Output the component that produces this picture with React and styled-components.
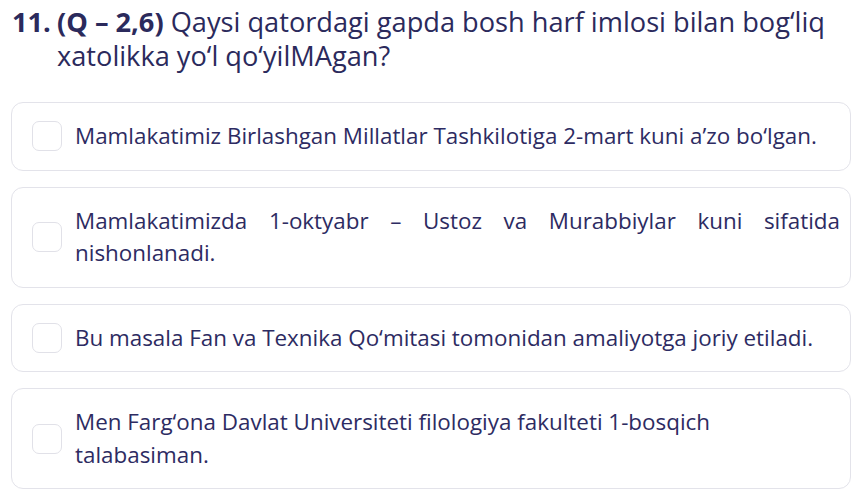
import React from 'react';
import styled, { createGlobalStyle } from 'styled-components';

const GlobalStyle = createGlobalStyle`
    body {
        margin: 0;
        background: #ffffff;
        font-family: 'Open Sans', 'Noto Sans', sans-serif;
        color: #2d2b62;
    }
`;

const Page = styled.div`
    padding: 5px 10px 4px 11px;
`;

const Question = styled.h1`
    display: flex;
    margin: 0 0 29px;
    font-size: 27.2px;
    line-height: 34px;
    font-weight: 400;
    color: #2b2a5c;
`;

const Number = styled.span`
    flex: 0 0 45px;
    padding-left: 1px;
    font-weight: 700;
`;

const Marker = styled.b`
    font-weight: 700;
`;

const OptionList = styled.div`
    display: flex;
    flex-direction: column;
    gap: 16px;
`;

const Option = styled.label`
    display: flex;
    align-items: center;
    gap: 13px;
    padding: 17px 10px 17px 20px;
    border: 1px solid #e3e3ea;
    border-radius: 12px;
    background: #fff;
    cursor: pointer;
`;

const Box = styled.span`
    flex: 0 0 30px;
    height: 30px;
    box-sizing: border-box;
    border: 1px solid #e1e1e8;
    border-radius: 7px;
    background: #fff;
`;

const OptionText = styled.span`
    flex: 1;
    font-size: 22.4px;
    line-height: 32.5px;
    color: #2d2b62;
    text-align: ${p => (p.$justify ? 'justify' : 'left')};
`;

const options = [
    { text: 'Mamlakatimiz Birlashgan Millatlar Tashkilotiga 2-mart kuni a’zo bo‘lgan.' },
    { text: 'Mamlakatimizda 1-oktyabr – Ustoz va Murabbiylar kuni sifatida nishonlanadi.', justify: true },
    { text: 'Bu masala Fan va Texnika Qo‘mitasi tomonidan amaliyotga joriy etiladi.' },
    { text: 'Men Farg‘ona Davlat Universiteti filologiya fakulteti 1-bosqich talabasiman.' },
];

const App = () => {
    return (
        <Page>
            <GlobalStyle />
            <Question>
                <Number>11.</Number>
                <span>
                    <Marker>(Q – 2,6)</Marker> Qaysi qatordagi gapda bosh harf imlosi bilan bog‘liq
                    xatolikka yo‘l qo‘yilMAgan?
                </span>
            </Question>

            <OptionList>
                {options.map(option => (
                    <Option key={option.text}>
                        <Box />
                        <OptionText $justify={option.justify}>{option.text}</OptionText>
                    </Option>
                ))}
            </OptionList>
        </Page>
    );
};

export default App;
